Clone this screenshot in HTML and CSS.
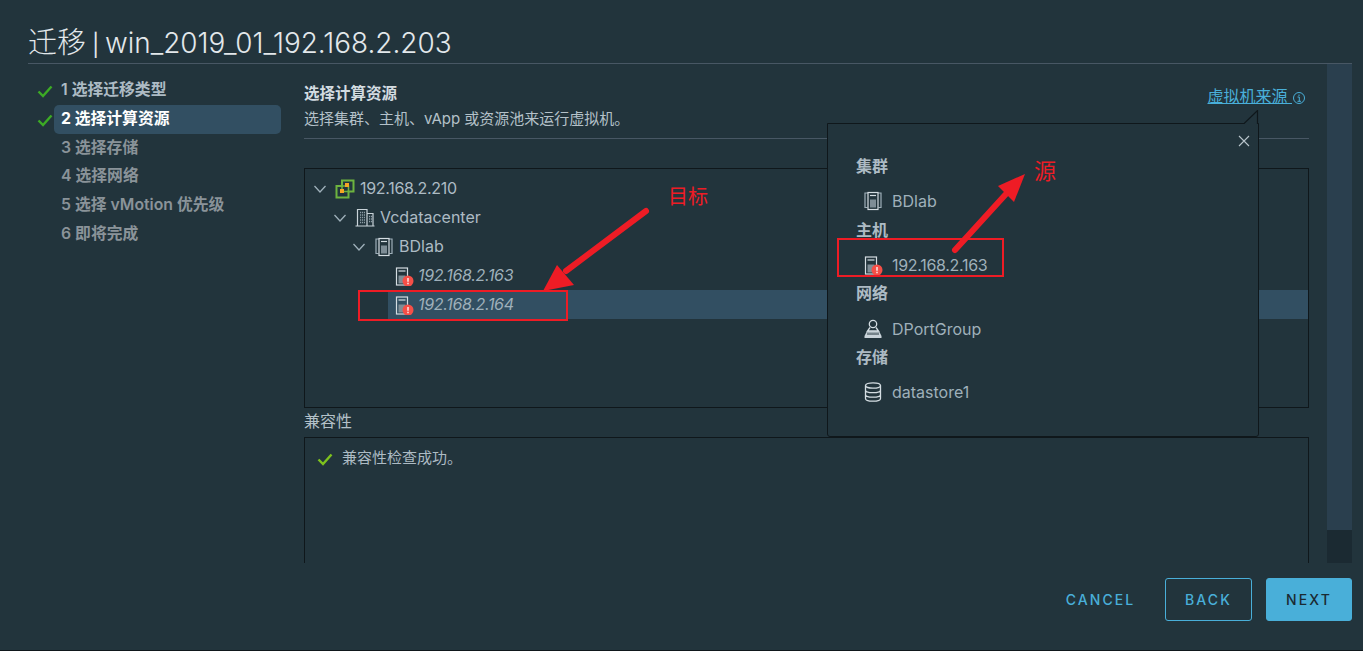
FILE: index.html
```html
<!DOCTYPE html>
<html lang="en">
<head>
    <meta charset="UTF-8">
    <meta name="viewport" content="width=device-width, initial-scale=1.0">
    <title>迁移</title>
    <link rel="stylesheet" href="styles.css">
</head>
<body>

    <svg class="icon-defs" width="0" height="0">
        <symbol id="i-check" viewBox="0 0 16 16">
            <path d="M1.500 8.500 6 13 14.500 3.500" fill="none" stroke="currentColor" stroke-width="2.400"/>
        </symbol>
        <symbol id="i-chevron" viewBox="0 0 14 14">
            <path d="M1.500 4 7 10 12.500 4" fill="none" stroke="#9fb0ba" stroke-width="1.300"/>
        </symbol>
        <symbol id="i-vcenter" viewBox="0 0 20 20">
            <path d="M7 1.500H18.500V12.500H13.500V18.500H1.500V7H7Z" fill="none" stroke="#6db33f" stroke-width="2"/>
            <path d="M7 7H13.500V12.500H7Z" fill="none" stroke="#6db33f" stroke-width="1.500"/>
            <rect x="10" y="4" width="4" height="4" fill="#f5a623"/>
            <rect x="5" y="10" width="4" height="4" fill="#f5a623"/>
        </symbol>
        <symbol id="i-datacenter" viewBox="0 0 20 20">
            <path d="M2.500 17.500V1.500H12V17.500M12 5.500H18V17.500M0.500 18H19.500" fill="none" stroke="#c9d3d9" stroke-width="1.200"/>
            <path d="M5 4.500H10M5 7H10M5 9.500H10M5 12H10M5 14.500H10M14 8.500H17M14 11H17M14 13.500H17" fill="none" stroke="#8d9da6" stroke-width="1.300" stroke-dasharray="1.200 .8"/>
        </symbol>
        <symbol id="i-cluster" viewBox="0 0 18 20">
            <path d="M3.500 16.500H1V2H5M14.500 16.500H17V2H13" fill="none" stroke="#9fb0ba" stroke-width="1.200"/>
            <rect x="4" y="1.500" width="10" height="17" fill="#22343c" stroke="#d4dde2" stroke-width="1.200"/>
            <path d="M6 4.500H12" stroke="#d4dde2" stroke-width="1.200"/>
            <rect x="6" y="8.500" width="6" height="8" fill="#7e8d96"/>
        </symbol>
        <symbol id="i-host" viewBox="0 0 20 20">
            <rect x="1.500" y="2" width="11" height="17" fill="none" stroke="#d4dde2" stroke-width="1.200"/>
            <path d="M3.500 5H10.500" stroke="#d4dde2" stroke-width="1.200"/>
            <rect x="3.500" y="9.500" width="7" height="8" fill="#7e8d96"/>
            <circle cx="13" cy="15" r="5.500" fill="#f54f47"/>
            <path d="M13 12V15.800M13 16.800V18.300" stroke="#fff" stroke-width="1.300"/>
        </symbol>
        <symbol id="i-portgroup" viewBox="0 0 20 20">
            <circle cx="10" cy="5" r="3.700" fill="none" stroke="#d4dde2" stroke-width="1.300"/>
            <path d="M7 8.500 4.500 12H15.500L13 8.500" fill="none" stroke="#d4dde2" stroke-width="1.300"/>
            <path d="M4 12 1.500 17V19H18.500V17L16 12Z" fill="#c9d3d9"/>
            <path d="M5 13.500V16M7 13.500V16M9 13.500V16M11 13.500V16M13 13.500V16M15 13.500V16" stroke="#22343c"/>
        </symbol>
        <symbol id="i-storage" viewBox="0 0 18 20">
            <ellipse cx="9" cy="3.500" rx="7.500" ry="2.700" fill="none" stroke="#d4dde2" stroke-width="1.300"/>
            <path d="M1.500 3.500V16.500C1.500 18 4.500 19.200 9 19.200S16.500 18 16.500 16.500V3.500M1.500 8C1.500 9.500 4.500 10.700 9 10.700S16.500 9.500 16.500 8M1.500 12.500C1.500 14 4.500 15.200 9 15.200S16.500 14 16.500 12.500" fill="none" stroke="#d4dde2" stroke-width="1.300"/>
        </symbol>
    </svg>

    <div class="dialog">
        <header class="dialog-head">
            <h1><span class="title-cjk">迁移</span> <span class="title-bar">|</span> win_2019_01_192.168.2.203</h1>
        </header>

        <div class="dialog-body">
            <nav class="steps">
                <div class="step done"><svg class="step-check"><use href="#i-check"/></svg><span class="step-label">1 选择迁移类型</span></div>
                <div class="step current"><svg class="step-check"><use href="#i-check"/></svg><span class="step-label">2 选择计算资源</span></div>
                <div class="step"><span class="step-label">3 选择存储</span></div>
                <div class="step"><span class="step-label">4 选择网络</span></div>
                <div class="step"><span class="step-label">5 选择 vMotion 优先级</span></div>
                <div class="step"><span class="step-label">6 即将完成</span></div>
            </nav>

            <main class="content">
                <div class="content-head">
                    <div>
                        <h2>选择计算资源</h2>
                        <p>选择集群、主机、vApp 或资源池来运行虚拟机。</p>
                    </div>
                    <div class="source-link">
                        <a href="#">虚拟机来源&nbsp;</a>
                        <svg class="info-icon" viewBox="0 0 14 14">
                            <circle cx="7" cy="7" r="5.500" fill="none" stroke="#49afd9"/>
                            <path d="M5.500 6H7.300V10.300M5.500 10.300H9M7 3.500V5" fill="none" stroke="#49afd9"/>
                        </svg>
                    </div>
                </div>

                <div class="tree">
                    <div class="tree-row level-0"><svg class="chevron"><use href="#i-chevron"/></svg><svg class="tree-icon"><use href="#i-vcenter"/></svg><span class="num">192.168.2.210</span></div>
                    <div class="tree-row level-1"><svg class="chevron"><use href="#i-chevron"/></svg><svg class="tree-icon"><use href="#i-datacenter"/></svg><span>Vcdatacenter</span></div>
                    <div class="tree-row level-2"><svg class="chevron"><use href="#i-chevron"/></svg><svg class="tree-icon"><use href="#i-cluster"/></svg><span>BDlab</span></div>
                    <div class="tree-row level-3 host"><svg class="tree-icon"><use href="#i-host"/></svg><span class="num">192.168.2.163</span></div>
                    <div class="tree-row level-3 host selected"><svg class="tree-icon"><use href="#i-host"/></svg><span class="num">192.168.2.164</span></div>
                </div>

                <div class="compat-title">兼容性</div>
                <div class="compat-box">
                    <svg class="compat-check"><use href="#i-check"/></svg>
                    <span>兼容性检查成功。</span>
                </div>
            </main>

            <div class="scrollbar"><div class="scroll-thumb"></div></div>
        </div>

        <footer class="dialog-foot">
            <button class="btn btn-link">CANCEL</button>
            <button class="btn btn-outline">BACK</button>
            <button class="btn btn-primary">NEXT</button>
        </footer>
    </div>

    <!-- source popover -->
    <div class="popover">
        <svg class="popover-tip" width="15" height="14" viewBox="0 0 15 14">
            <path d="M0 14 14 .5V14Z" fill="#22343c"/>
            <path d="M0 13.500 13.500 .5V14" fill="none" stroke="#0f171b" stroke-width="1.200"/>
        </svg>
        <svg class="popover-close" viewBox="0 0 12 12">
            <path d="M1 1 11 11M11 1 1 11" stroke="#b9c5cc" stroke-width="1.100"/>
        </svg>
        <div class="pop-title">集群</div>
        <div class="pop-item"><svg class="pop-icon"><use href="#i-cluster"/></svg><span>BDlab</span></div>
        <div class="pop-title">主机</div>
        <div class="pop-item"><svg class="pop-icon pop-host"><use href="#i-host"/></svg><span class="num">192.168.2.163</span></div>
        <div class="pop-title">网络</div>
        <div class="pop-item"><svg class="pop-icon"><use href="#i-portgroup"/></svg><span>DPortGroup</span></div>
        <div class="pop-title">存储</div>
        <div class="pop-item"><svg class="pop-icon"><use href="#i-storage"/></svg><span>datastore1</span></div>
    </div>

    <!-- red markup drawn over the screenshot -->
    <div class="mark-box mark-target"></div>
    <div class="mark-box mark-source"></div>
    <span class="mark-label label-target">目标</span>
    <span class="mark-label label-source">源</span>
    <svg class="mark-arrows" width="1363" height="651" viewBox="0 0 1363 651">
        <path d="M646 211 566 271" stroke="#ee1c25" stroke-width="6" stroke-linecap="round"/>
        <path d="M543 291 557 265 574 285Z" fill="#ee1c25"/>
        <path d="M955 250 1006 194" stroke="#ee1c25" stroke-width="6" stroke-linecap="round"/>
        <path d="M1025 174 998 186 1014 202Z" fill="#ee1c25"/>
    </svg>

</body>
</html>
```

FILE: styles.css
```css
* {
    box-sizing: border-box;
}
html, body {
    height: 651px;
}
body {
    margin: 0;
    background-color: #22343c;
    color: #adbbc4;
    font-family: Inter, "Noto Sans CJK SC", sans-serif;
    font-size: 16px;
    overflow: hidden;
}
.icon-defs {
    position: absolute;
}
.num {
    letter-spacing: -0.3px;
}
.dialog {
    display: flex;
    flex-direction: column;
    height: 651px;
    border-bottom: 1px solid #0f171b;
}

/* header */
.dialog-head {
    height: 64px;
    margin: 0 11px 0 28px;
    border-bottom: 1px solid #485764;
}
.dialog-head h1 {
    margin: 0;
    padding-top: 25px;
    font-size: 27.900px;
    line-height: 36px;
    font-weight: 300;
    word-spacing: -2px;
    color: #e3e8eb;
}
.title-cjk {
    font-size: 29px;
}
.title-bar {
    font-size: 22px;
    font-weight: 400;
}

/* body */
.dialog-body {
    display: flex;
    height: 499px;
    padding-left: 28px;
}
.steps {
    width: 276px;
    padding-top: 12px;
    flex-shrink: 0;
}
.step {
    position: relative;
    height: 28.800px;
    padding: 0 0 0 26px;
    line-height: 28.800px;
    color: #8a9399;
    font-size: 15.800px;
    font-weight: 600;
}
.step-label {
    display: block;
    width: 227px;
    padding-left: 7px;
    border-radius: 5px;
}
.step.done {
    color: #adbbc4;
}
.step.current {
    color: #fff;
    font-weight: 700;
}
.step.current .step-label {
    background-color: #324f62;
}
.step-check {
    position: absolute;
    left: 9px;
    top: 7px;
    width: 16px;
    height: 16px;
    color: #3cab25;
}

.content {
    width: 1005px;
    flex-shrink: 0;
    overflow: hidden;
}
.content-head {
    display: flex;
    justify-content: space-between;
    height: 75px;
    padding-top: 20px;
    border-bottom: 1px solid #485764;
}
.content-head h2 {
    margin: 0;
    font-size: 15.500px;
    line-height: 19px;
    font-weight: 700;
    color: #d3dce1;
}
.content-head p {
    margin: 6px 0 0;
    font-size: 15px;
    line-height: 19px;
    color: #b4c1c9;
}
.source-link {
    display: flex;
    align-items: flex-start;
    padding: 2px 3px 0 0;
    line-height: 20px;
}
.source-link a {
    color: #49afd9;
    font-size: 16px;
}
.info-icon {
    width: 14px;
    height: 14px;
    margin-top: 5px;
}

.tree {
    height: 240px;
    margin-top: 29px;
    padding-top: 5px;
    border: 1px solid #0f171b;
}
.tree-row {
    display: flex;
    align-items: center;
    height: 29px;
    font-size: 16px;
}
.tree-row span {
    margin-bottom: 2px;
}
.chevron {
    width: 14px;
    height: 14px;
    margin-right: 8px;
}
.tree-icon {
    width: 20px;
    height: 20px;
    margin-right: 5px;
}
.level-0 {
    padding-left: 8px;
}
.level-1 {
    padding-left: 28px;
}
.level-2 {
    padding-left: 47px;
}
.level-3 {
    padding-left: 90px;
}
.host span {
    font-style: italic;
    color: #9fb0ba;
}
.host .tree-icon {
    margin-right: 3px;
}
.selected {
    margin-left: 83px;
    padding-left: 7px;
    background-color: #324f62;
}
.compat-title {
    margin-top: 4px;
    line-height: 19px;
    color: #b4c1c9;
}
.compat-box {
    display: flex;
    gap: 9px;
    height: 200px;
    margin-top: 6px;
    padding: 10px 12px;
    border: 1px solid #0f171b;
    align-items: flex-start;
    font-size: 15px;
    line-height: 20px;
}
.compat-check {
    width: 16px;
    height: 16px;
    margin-top: 3px;
    color: #7ec21e;
}

.scrollbar {
    width: 25px;
    margin-left: 18px;
    background-color: #1b2a32;
}
.scroll-thumb {
    height: 466px;
    background-color: #2a3f4e;
}

/* footer */
.dialog-foot {
    display: flex;
    justify-content: flex-end;
    align-items: flex-start;
    gap: 14px;
    padding: 15px 11px 0 0;
}
.btn {
    height: 43px;
    padding: 0;
    border: 1px solid transparent;
    border-radius: 3px;
    background: none;
    font-family: inherit;
    font-size: 14px;
    font-weight: 500;
    letter-spacing: 2.100px;
    cursor: pointer;
}
.btn-link {
    width: 87px;
    margin-right: 7px;
    color: #49afd9;
}
.btn-outline {
    width: 87px;
    border-color: #49afd9;
    color: #49afd9;
}
.btn-primary {
    width: 86px;
    background-color: #49afd9;
    border-color: #49afd9;
    color: #1b2a32;
}

/* popover */
.popover {
    position: absolute;
    left: 827px;
    top: 123px;
    width: 432px;
    height: 314px;
    padding: 33px 0 0 28px;
    background-color: #22343c;
    border: 1px solid #0f171b;
    border-radius: 0 0 3px 3px;
}
.popover-tip {
    position: absolute;
    right: -1px;
    top: -14px;
}
.popover-close {
    position: absolute;
    right: 8px;
    top: 11px;
    width: 12px;
    height: 12px;
}
.pop-title {
    height: 19px;
    line-height: 19px;
    font-weight: 700;
    color: #adbbc4;
}
.pop-item {
    display: flex;
    align-items: center;
    height: 44.700px;
    padding: 6px 0 0 7px;
    color: #9fb0ba;
}
.pop-icon {
    width: 20px;
    height: 20px;
    margin-right: 9px;
}
.pop-host {
    margin-left: 1px;
    margin-right: 8px;
}

/* markup */
.mark-box {
    position: absolute;
    border: 2px solid #ee1c25;
}
.mark-target {
    left: 358px;
    top: 290px;
    width: 210px;
    height: 31px;
}
.mark-source {
    left: 837px;
    top: 238px;
    width: 167px;
    height: 39px;
}
.mark-label {
    position: absolute;
    color: #ee1c25;
    font-size: 20px;
    line-height: 26px;
}
.label-target {
    left: 668px;
    top: 184px;
}
.label-source {
    left: 1034px;
    top: 158px;
    font-size: 22px;
}
.mark-arrows {
    position: absolute;
    left: 0;
    top: 0;
    pointer-events: none;
}
```
